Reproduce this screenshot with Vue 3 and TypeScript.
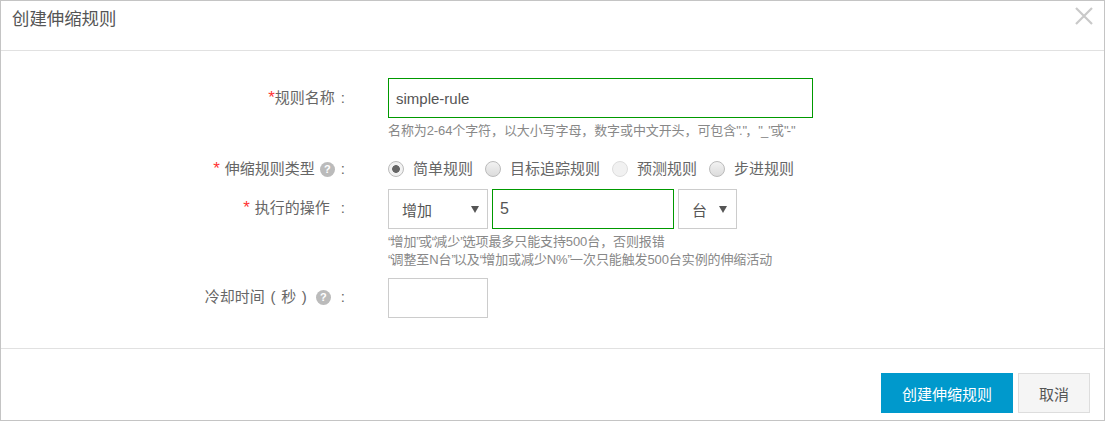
<script setup lang="ts">
const radios = [
  { label: '简单规则', checked: true, disabled: false },
  { label: '目标追踪规则', checked: false, disabled: false },
  { label: '预测规则', checked: false, disabled: true },
  { label: '步进规则', checked: false, disabled: false },
]
</script>

<template>
  <div class="dialog">
    <header class="head">
      <h1 class="title">创建伸缩规则</h1>
      <svg class="close" width="20" height="20" viewBox="0 0 20 20" aria-label="关闭">
        <path d="M2 2 L18 18 M18 2 L2 18" stroke="#c9c9c9" stroke-width="2.2" fill="none" />
      </svg>
    </header>

    <main class="body">
      <div class="row row-name">
        <div class="label"><span class="star">*</span>规则名称<span class="colon c1">:</span></div>
        <div class="field">
          <input class="input input-name ok" value="simple-rule" />
          <p class="hint hint-name">名称为2-64个字符，以大小写字母，数字或中文开头，可包含<span class="qm">"</span>.<span class="qm">"</span>，<span class="qm">"</span>_<span class="qm">"</span>或<span class="qm">"</span>-<span class="qm">"</span></p>
        </div>
      </div>

      <div class="row row-type">
        <div class="label"><span class="star">*</span><span class="gap-l">伸缩规则类型</span><span class="q">?</span><span class="colon c2">:</span></div>
        <div class="field radios">
          <label v-for="r in radios" :key="r.label" class="radio">
            <span class="dot" :class="{ checked: r.checked, disabled: r.disabled }"></span>
            <span>{{ r.label }}</span>
          </label>
        </div>
      </div>

      <div class="row row-op">
        <div class="label"><span class="star">*</span><span class="gap-l">执行的操作</span><span class="colon c3">:</span></div>
        <div class="field">
          <div class="op-line">
            <div class="select select-op"><span>增加</span><i class="arrow"></i></div>
            <input class="input input-num ok" value="5" />
            <div class="select select-unit"><span>台</span><i class="arrow"></i></div>
          </div>
          <p class="hint hint-op"><span class="qm">“</span>增加<span class="qm">”</span>或<span class="qm">“</span>减少<span class="qm">”</span>选项最多只能支持500台，否则报错<br /><span class="qm">“</span>调整至N台<span class="qm">”</span>以及<span class="qm">“</span>增加或减少N%<span class="qm">”</span>一次只能触发500台实例的伸缩活动</p>
        </div>
      </div>

      <div class="row row-cool">
        <div class="label"><span class="cool-text">冷却时间 ( 秒 )</span><span class="q q-cool">?</span><span class="colon c4">:</span></div>
        <div class="field"><input class="input input-cool" /></div>
      </div>
    </main>

    <footer class="foot">
      <button class="btn primary">创建伸缩规则</button>
      <button class="btn plain">取消</button>
    </footer>
  </div>
</template>

<style>
html, body { margin: 0; background: #fff; }
</style>

<style scoped>
.dialog {
  box-sizing: border-box;
  width: 1105px;
  height: 421px;
  border: 1px solid #c4c4c4;
  display: flex;
  flex-direction: column;
  font-family: "Liberation Sans", "Noto Sans CJK SC", sans-serif;
  color: #666;
  background: #fff;
}
.head {
  height: 49px;
  flex: none;
  border-bottom: 1px solid #e1e1e1;
  display: flex;
  justify-content: space-between;
  align-items: flex-start;
  padding: 0 10px 0 11px;
}
.title { margin: 6px 0 0; font-size: 17.4px; line-height: 24px; font-weight: 400; color: #555; }
.close { margin-top: 5px; }
.body { flex: 1; padding-top: 27px; border-bottom: 1px solid #e1e1e1; }
.row { display: grid; grid-template-columns: 345px 1fr; column-gap: 42px; }
.label {
  text-align: right;
  font-size: 15px;
  line-height: 20px;
  white-space: nowrap;
  color: #666;
}
.star { color: #f33; font-size: 17px; line-height: 0; }
.gap-l { margin-left: 5px; }
.cool-text { word-spacing: 1.5px; }
.row-name .label { padding-top: 10px; }
.row-type { margin-top: 19px; }
.row-op { margin-top: 10px; }
.row-op .label { padding-top: 9px; }
.row-cool { margin-top: 9px; }
.row-cool .label { padding-top: 9px; }
.colon { margin-right: 1px; }
.c1 { margin-left: 6px; }
.c2 { margin-left: 6px; }
.c3 { margin-left: 11px; }
.c4 { margin-left: 10px; }
.q {
  display: inline-block;
  width: 15px;
  height: 15px;
  line-height: 15px;
  border-radius: 50%;
  background: #bbb;
  color: #fff;
  font-size: 11px;
  font-weight: 700;
  text-align: center;
  margin-left: 5px;
  vertical-align: 1px;
}
.q-cool { margin-left: 9px; }
.input {
  box-sizing: border-box;
  display: block;
  height: 40px;
  border: 1px solid #ccc;
  outline: none;
  padding: 0 7px;
  font: 15px "Liberation Sans", "Noto Sans CJK SC", sans-serif;
  color: #555;
  background: #fff;
}
.ok { border-color: #090; }
.input-name { width: 425px; }
.input-num { width: 182px; margin: 0 4px; font-size: 16px; }
.input-cool { width: 100px; }
.hint { margin: 0; font-size: 13px; line-height: 18px; color: #888; white-space: nowrap; letter-spacing: -0.1px; }
.qm { letter-spacing: -1.8px; }
.hint-name { margin-top: 4px; }
.hint-op { margin-top: 4px; }
.radios { display: flex; align-items: center; height: 20px; }
.radio { display: inline-flex; align-items: center; font-size: 15px; line-height: 20px; color: #666; margin-right: 12px; }
.dot {
  box-sizing: border-box;
  width: 16px;
  height: 16px;
  border-radius: 50%;
  border: 1px solid #bbb;
  background: linear-gradient(#f2f2f2, #dcdcdc);
  margin-right: 9px;
  flex: none;
}
.dot.checked { background: radial-gradient(circle, #666 0 3.5px, #f2f2f2 4.2px); }
.dot.disabled { background: #f1f1f1; border-color: #ddd; }
.op-line { display: flex; }
.select {
  box-sizing: border-box;
  height: 40px;
  border: 1px solid #ccc;
  display: flex;
  align-items: center;
  justify-content: space-between;
  font-size: 15px;
  color: #555;
}
.select-op { width: 100px; padding: 0 8px 0 13px; }
.select-unit { width: 59px; padding: 0 9px 0 13px; }
.arrow {
  width: 0;
  height: 0;
  border-left: 4px solid transparent;
  border-right: 4px solid transparent;
  border-top: 7px solid #555;
}
.foot {
  height: 71px;
  flex: none;
  display: flex;
  justify-content: flex-end;
  align-items: flex-start;
  padding: 24px 14px 0 0;
  box-sizing: border-box;
  gap: 5px;
}
.btn {
  box-sizing: border-box;
  height: 40px;
  font-family: inherit;
  font-size: 15px;
  border-radius: 0;
  padding: 0;
}
.primary { width: 132px; background: #0099cc; border: none; color: #fff; }
.plain { width: 72px; background: #f5f5f5; border: 1px solid #ddd; color: #555; }
</style>
